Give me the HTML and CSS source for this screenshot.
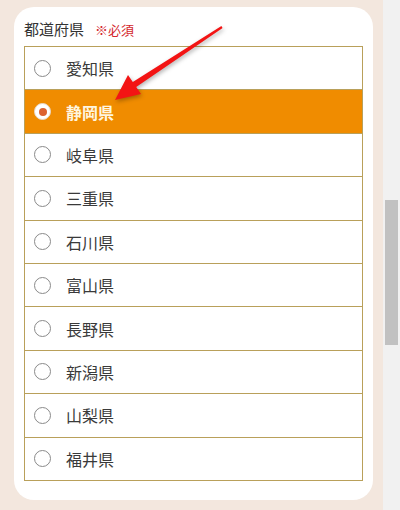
FILE: index.html
```html
<!DOCTYPE html>
<html lang="ja">
<head>
<meta charset="utf-8">
<link rel="stylesheet" href="styles.css">
</head>
<body>
<div class="page">
  <main class="main">
    <section class="card">
      <div class="label">都道府県<span class="req">※必須</span></div>
      <ul class="list">
        <li class="row"><span class="radio"></span><span class="name">愛知県</span></li>
        <li class="row selected"><span class="radio"></span><span class="name">静岡県</span></li>
        <li class="row"><span class="radio"></span><span class="name">岐阜県</span></li>
        <li class="row"><span class="radio"></span><span class="name">三重県</span></li>
        <li class="row"><span class="radio"></span><span class="name">石川県</span></li>
        <li class="row"><span class="radio"></span><span class="name">富山県</span></li>
        <li class="row"><span class="radio"></span><span class="name">長野県</span></li>
        <li class="row"><span class="radio"></span><span class="name">新潟県</span></li>
        <li class="row"><span class="radio"></span><span class="name">山梨県</span></li>
        <li class="row"><span class="radio"></span><span class="name">福井県</span></li>
      </ul>
    </section>
  </main>
  <div class="scrollbar"><div class="thumb"></div></div>
</div>
<svg class="arrow" width="400" height="510" viewBox="0 0 400 510">
  <polygon points="115,100 128,75 132.8,82 221.4,26 222.6,28 136.2,87 141,94" fill="#f31414"/>
</svg>
</body>
</html>
```
FILE: styles.css
```css
html, body {
  margin: 0;
  padding: 0;
}
body {
  position: relative;
  width: 400px;
  height: 510px;
  overflow: hidden;
  background: #f3e7de;
  font-family: "Noto Sans CJK JP", "Noto Sans", sans-serif;
  color: #333;
}
.page {
  display: flex;
  height: 510px;
}
.main {
  width: 359px;
  padding: 7px 10px 0 14px;
}
.card {
  background: #fff;
  border-radius: 20px;
  padding: 11px 10px 20px 10px;
  height: 462px;
}
.label {
  font-size: 15px;
  line-height: 22px;
  height: 22px;
  margin-bottom: 6px;
  color: #333;
}
.req {
  font-size: 13px;
  color: #d3262c;
  margin-left: 11px;
}
.list {
  list-style: none;
  margin: 0;
  padding: 0;
  border: 1px solid #b9a05a;
}
.row {
  display: flex;
  align-items: center;
  height: 42.4px;
  border-top: 1px solid #b9a05a;
  padding-left: 9px;
  font-size: 16px;
  color: #3a3a3a;
}
.row:first-child {
  border-top: none;
}
.radio {
  width: 15px;
  height: 15px;
  border: 1px solid #8a8a8a;
  border-radius: 50%;
  background: #fff;
  flex: none;
  display: flex;
  align-items: center;
  justify-content: center;
}
.name {
  margin-left: 15px;
}
.selected {
  background: #f08c00;
  color: #fff6e0;
  font-weight: 600;
}
.selected .radio {
  border-color: #e8d8c8;
}
.selected .radio::after {
  content: "";
  width: 8px;
  height: 8px;
  border-radius: 50%;
  background: #dc6230;
}
.scrollbar {
  width: 17px;
  background: #f1f1f1;
  display: flex;
  justify-content: center;
}
.thumb {
  width: 13px;
  height: 145px;
  margin-top: 200px;
  background: #c1c1c1;
}
.arrow {
  position: absolute;
  left: 0;
  top: 0;
  pointer-events: none;
  filter: drop-shadow(1px 2px 2px rgba(0,0,0,0.3));
}
```
